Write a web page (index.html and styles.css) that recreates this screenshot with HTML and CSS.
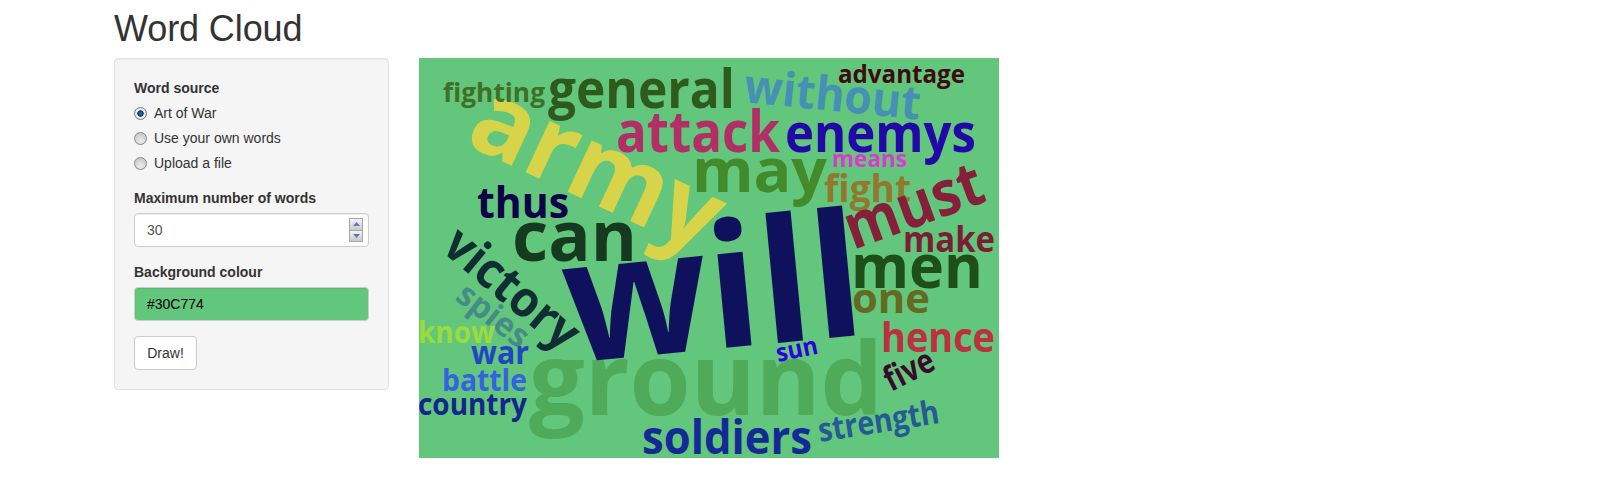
FILE: index.html
```html
<!DOCTYPE html>
<html lang="en">
<head>
<meta charset="utf-8">
<title>Word Cloud</title>
<link rel="stylesheet" href="styles.css">
</head>
<body>
<div class="page">
  <h2 class="title">Word Cloud</h2>
  <div class="row">
    <form class="well">
      <div class="group">
        <div class="label">Word source</div>
        <div class="radios">
          <div class="radio"><span class="dot on"></span>Art of War</div>
          <div class="radio"><span class="dot"></span>Use your own words</div>
          <div class="radio"><span class="dot"></span>Upload a file</div>
        </div>
      </div>
      <div class="group">
        <div class="label">Maximum number of words</div>
        <div class="field number">30
          <span class="spin">
            <span class="step"><svg class="tri" viewBox="0 0 7 4"><path d="M3.5 0 7 4H0z"/></svg></span>
            <span class="step"><svg class="tri" viewBox="0 0 7 4"><path d="M0 0h7L3.500 4z"/></svg></span>
          </span>
        </div>
      </div>
      <div class="group">
        <div class="label">Background colour</div>
        <div class="field colour">#30C774</div>
      </div>
      <button type="button" class="btn">Draw!</button>
    </form>
    <svg class="cloud" width="580" height="400" viewBox="0 0 580 400">
      <rect width="580" height="400" fill="#62C67C"/>
      <text class="w" lengthAdjust="spacingAndGlyphs" font-size="100" fill="#4FAA5A" transform="translate(110 357)" textLength="354">ground</text>
      <text class="w" lengthAdjust="spacingAndGlyphs" font-size="104" fill="#D8D44A" transform="translate(44 85) rotate(25)" textLength="265">army</text>
      <text class="w" lengthAdjust="spacingAndGlyphs" font-size="172" fill="#0F115C" transform="translate(150 305) rotate(-5.500)" textLength="300">will</text>
      <text class="w" lengthAdjust="spacingAndGlyphs" font-size="53" fill="#2F5A1E" transform="translate(129 50)" textLength="187">general</text>
      <text class="w" lengthAdjust="spacingAndGlyphs" font-size="27" fill="#3F7028" transform="translate(24 44)" textLength="102">fighting</text>
      <text class="w" lengthAdjust="spacingAndGlyphs" font-size="57" fill="#B22E66" transform="translate(197 94)" textLength="164">attack</text>
      <text class="w" lengthAdjust="spacingAndGlyphs" font-size="54" fill="#2308A8" transform="translate(366 94)" textLength="191">enemys</text>
      <text class="w" lengthAdjust="spacingAndGlyphs" font-size="47" fill="#4690B6" transform="translate(324 44) rotate(5.700)" textLength="177">without</text>
      <text class="w" lengthAdjust="spacingAndGlyphs" font-size="25" fill="#3F0A12" transform="translate(419 25)" textLength="127">advantage</text>
      <text class="w" lengthAdjust="spacingAndGlyphs" font-size="60" fill="#438A2B" transform="translate(273 134)" textLength="135">may</text>
      <text class="w" lengthAdjust="spacingAndGlyphs" font-size="23" fill="#D93BD0" transform="translate(413 109)" textLength="75">means</text>
      <text class="w" lengthAdjust="spacingAndGlyphs" font-size="38" fill="#92782C" transform="translate(405 144)" textLength="87">fight</text>
      <text class="w" lengthAdjust="spacingAndGlyphs" font-size="62" fill="#861F3A" transform="translate(434 192) rotate(-20)" textLength="144">must</text>
      <text class="w" lengthAdjust="spacingAndGlyphs" font-size="36" fill="#7B1E33" transform="translate(484 194)" textLength="92">make</text>
      <text class="w" lengthAdjust="spacingAndGlyphs" font-size="43" fill="#0F0048" transform="translate(58 160)" textLength="92">thus</text>
      <text class="w" lengthAdjust="spacingAndGlyphs" font-size="70" fill="#163A20" transform="translate(93 203)" textLength="125">can</text>
      <text class="w" lengthAdjust="spacingAndGlyphs" font-size="50" fill="#112D34" transform="translate(21 192) rotate(40)" textLength="160">victory</text>
      <text class="w" lengthAdjust="spacingAndGlyphs" font-size="33" fill="#468C86" transform="translate(35 241) rotate(38)" textLength="82">spies</text>
      <text class="w" lengthAdjust="spacingAndGlyphs" font-size="30" fill="#9BDC3C" transform="translate(-1 285)" textLength="77">know</text>
      <text class="w" lengthAdjust="spacingAndGlyphs" font-size="32" fill="#2245C5" transform="translate(52 306)" textLength="58">war</text>
      <text class="w" lengthAdjust="spacingAndGlyphs" font-size="31" fill="#3563E0" transform="translate(23 333)" textLength="85">battle</text>
      <text class="w" lengthAdjust="spacingAndGlyphs" font-size="30" fill="#14258B" transform="translate(-1 357)" textLength="109">country</text>
      <text class="w" lengthAdjust="spacingAndGlyphs" font-size="47" fill="#132A96" transform="translate(223 396)" textLength="170">soldiers</text>
      <text class="w" lengthAdjust="spacingAndGlyphs" font-size="33" fill="#255A96" transform="translate(401 384) rotate(-9)" textLength="122">strength</text>
      <text class="w" lengthAdjust="spacingAndGlyphs" font-size="34" fill="#3A0A2E" transform="translate(472 334) rotate(-27)" textLength="52">five</text>
      <text class="w" lengthAdjust="spacingAndGlyphs" font-size="25" fill="#2E00E0" transform="translate(359 304) rotate(-12)" textLength="42">sun</text>
      <text class="w" lengthAdjust="spacingAndGlyphs" font-size="41" fill="#BE3040" transform="translate(462 294)" textLength="114">hence</text>
      <text class="w" lengthAdjust="spacingAndGlyphs" font-size="41" fill="#656A20" transform="translate(433 255)" textLength="78">one</text>
      <text class="w" lengthAdjust="spacingAndGlyphs" font-size="60" fill="#1F4F18" transform="translate(432 230)" textLength="132">men</text>
    </svg>
  </div>
</div>
</body>
</html>
```
FILE: styles.css
```css
* { box-sizing: border-box; }
html, body { margin: 0; padding: 0; background: #fff; }
body {
  font-family: "Liberation Sans", Arial, sans-serif;
  font-size: 14px;
  line-height: 20px;
  color: #333;
}
.page { padding: 9px 0 0 114px; }
.title {
  margin: 0 0 9px;
  font-size: 36px;
  font-weight: 400;
  line-height: 40px;
  letter-spacing: -.1px;
}
.row { display: flex; align-items: flex-start; gap: 30px; }
.well {
  width: 275px;
  padding: 19px;
  background: #f5f5f5;
  border: 1px solid #e3e3e3;
  border-radius: 4px;
  box-shadow: inset 0 1px 1px rgba(0,0,0,.05);
}
.group { margin-bottom: 15px; }
.label { font-weight: 700; margin-bottom: 5px; }
.radios { display: flex; flex-direction: column; gap: 5px; }
.radio { display: flex; align-items: center; gap: 7px; height: 20px; }
.dot {
  width: 13px;
  height: 13px;
  border-radius: 50%;
  border: 1px solid #8a8a8a;
  background: radial-gradient(circle at 50% 70%, #eee 0, #ccc 70%, #b4b4b4 100%);
}
.dot.on {
  border-color: #7a7a7a;
  background: radial-gradient(circle, #2f7fb8 0, #123f68 32%, #123f68 38%, #f0f0f0 44%, #d6d6d6 100%);
}
.field {
  position: relative;
  width: 235px;
  height: 34px;
  padding: 6px 12px;
  border: 1px solid #ccc;
  border-radius: 4px;
  background: #fff;
  box-shadow: inset 0 1px 1px rgba(0,0,0,.075);
}
.number { color: #555; }
.colour { background: #62C67C; color: #000; }
.spin {
  position: absolute;
  top: 4px;
  right: 5px;
  width: 14px;
  height: 24px;
  display: flex;
  flex-direction: column;
  border: 1px solid #a8a8a8;
  gap: 1px;
  background: #a8a8a8;
}
.step {
  flex: 1;
  display: flex;
  align-items: center;
  justify-content: center;
  background: linear-gradient(#f4f4f4, #c9c9c9);
}
.tri { width: 7px; height: 4px; fill: #6b70c0; display: block; }
.btn {
  display: block;
  width: 63px;
  height: 34px;
  padding: 0;
  font: inherit;
  color: #333;
  background: #fff;
  border: 1px solid #ccc;
  border-radius: 4px;
}
.cloud { display: block; }
.w {
  font-family: "Open Sans", "Noto Sans", sans-serif;
  font-weight: 700;
}
```
